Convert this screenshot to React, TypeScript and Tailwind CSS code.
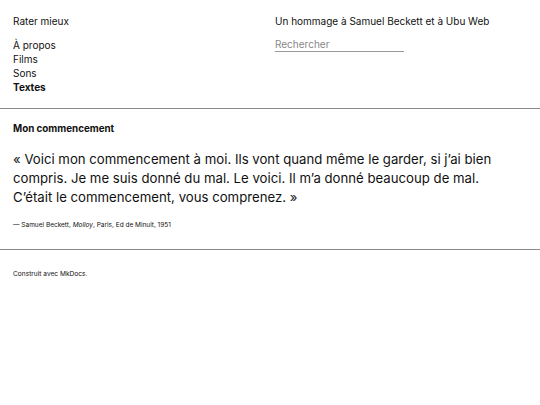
import React from 'react';

const navItems = [
  { label: 'À propos', active: false },
  { label: 'Films', active: false },
  { label: 'Sons', active: false },
  { label: 'Textes', active: true },
];

export default function App() {
  return (
    <div className="min-h-[405px] bg-white text-[#111] font-['Inter',sans-serif]">
      {/* Header: site name + nav on the left, tagline + search on the right */}
      <header className="grid grid-cols-2 px-[13px] pt-[14px] pb-[14px] border-b border-[#8a8a8a]">
        <div>
          <div className="text-[10px] leading-[14px]">Rater mieux</div>
          <nav className="mt-[10px] flex flex-col text-[10px] leading-[14px]">
            {navItems.map((item) => (
              <a key={item.label} className={item.active ? 'font-bold' : ''}>
                {item.label}
              </a>
            ))}
          </nav>
        </div>
        <div className="pl-[5px]">
          <div className="text-[10px] leading-[14px]">Un hommage à Samuel Beckett et à Ubu Web</div>
          <input
            type="text"
            placeholder="Rechercher"
            className="mt-[10px] w-[129px] border-b border-[#999] text-[10px] leading-[13px] outline-none placeholder:text-[#888]"
          />
        </div>
      </header>

      <main className="px-[13px] pt-[13px] pb-[19px] border-b border-[#8a8a8a]">
        <h1 className="text-[9.8px] leading-[14px] font-bold">Mon commencement</h1>
        <blockquote className="mt-[14px] max-w-[500px] text-[13.2px] leading-[19px]">
          « Voici mon commencement à moi. Ils vont quand même le garder, si j’ai bien compris. Je me suis donné du mal. Le
          voici. Il m’a donné beaucoup de mal. C’était le commencement, vous comprenez. »
        </blockquote>
        <p className="mt-[13px] text-[6.5px] leading-[10px]">
          — Samuel Beckett, <em className="italic">Molloy</em>, Paris, Ed de Minuit, 1951
        </p>
      </main>

      <footer className="px-[13px] pt-[19px] text-[6.6px] leading-[10px]">Construit avec MkDocs.</footer>
    </div>
  );
}
